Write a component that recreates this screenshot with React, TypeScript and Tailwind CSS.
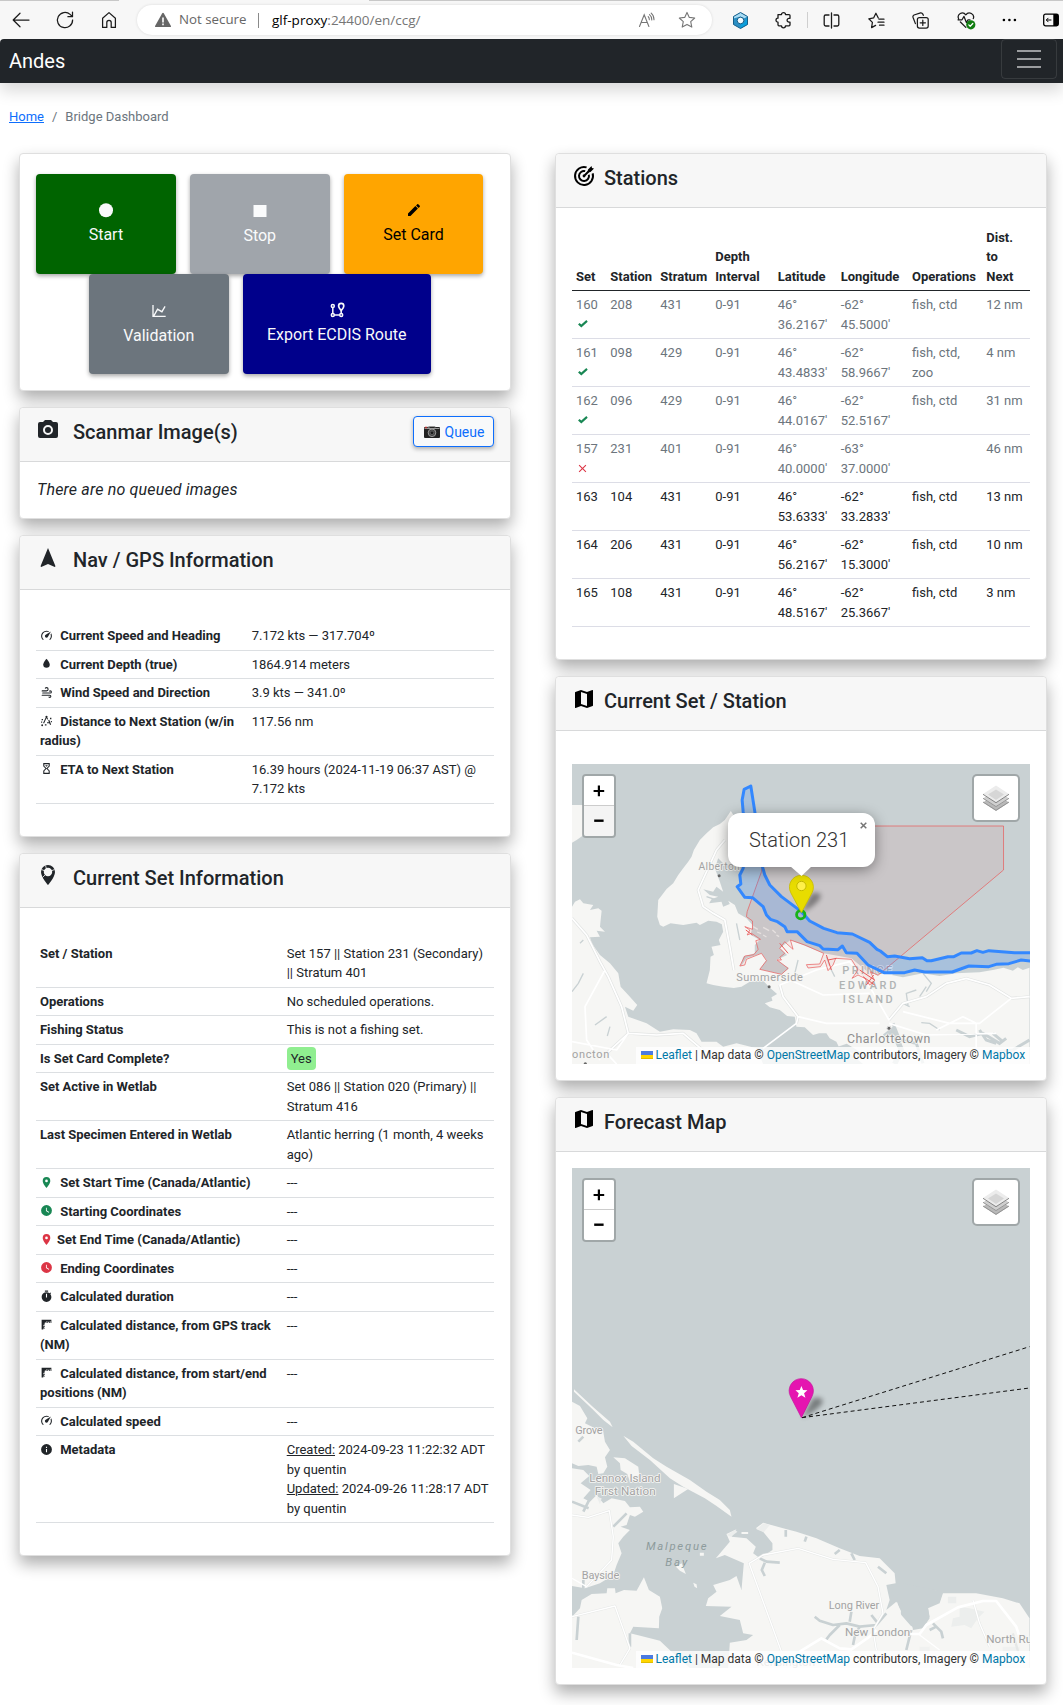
import React from "react";

const P = {
  camera:
    "M4,4H7L9,2H15L17,4H20A2,2 0 0,1 22,6V18A2,2 0 0,1 20,20H4A2,2 0 0,1 2,18V6A2,2 0 0,1 4,4M12,7A5,5 0 0,0 7,12A5,5 0 0,0 12,17A5,5 0 0,0 17,12A5,5 0 0,0 12,7M12,9A3,3 0 0,1 15,12A3,3 0 0,1 12,15A3,3 0 0,1 9,12A3,3 0 0,1 12,9Z",
  nav: "M12,2L4.5,20.29L5.21,21L12,18L18.79,21L19.5,20.29L12,2Z",
  water: "M12,20A6,6 0 0,1 6,14C6,10 12,3.25 12,3.25C12,3.25 18,10 18,14A6,6 0 0,1 12,20Z",
  speed:
    "M12,16A3,3 0 0,1 9,13C9,11.88 9.61,10.9 10.5,10.39L20.21,4.77L14.68,14.35C14.18,15.33 13.17,16 12,16M12,3C13.81,3 15.5,3.5 16.97,4.32L14.87,5.53C14,5.19 13,5 12,5A8,8 0 0,0 4,13C4,15.21 4.89,17.21 6.34,18.65H6.35C6.74,19.04 6.74,19.67 6.35,20.06C5.96,20.45 5.32,20.45 4.93,20.07V20.07C3.12,18.26 2,15.76 2,13A10,10 0 0,1 12,3M22,13C22,15.76 20.88,18.26 19.07,20.07V20.07C18.68,20.45 18.05,20.45 17.66,20.06C17.27,19.67 17.27,19.04 17.66,18.65V18.65C19.11,17.2 20,15.21 20,13C20,12 19.81,11 19.46,10.1L20.67,8C21.5,9.5 22,11.18 22,13Z",
  wind: "M4,10A1,1 0 0,1 3,9A1,1 0 0,1 4,8H12A2,2 0 0,0 14,6A2,2 0 0,0 12,4C11.45,4 10.95,4.22 10.59,4.59C10.2,5 9.56,5 9.17,4.59C8.78,4.2 8.78,3.56 9.17,3.17C9.9,2.45 10.9,2 12,2A4,4 0 0,1 16,6A4,4 0 0,1 12,10H4M19,12A1,1 0 0,0 20,11A1,1 0 0,0 19,10C18.72,10 18.47,10.11 18.29,10.29C17.9,10.68 17.27,10.68 16.88,10.29C16.5,9.9 16.5,9.27 16.88,8.88C17.42,8.34 18.17,8 19,8A3,3 0 0,1 22,11A3,3 0 0,1 19,14H5A1,1 0 0,1 4,13A1,1 0 0,1 5,12H19M18,18H4A1,1 0 0,1 3,17A1,1 0 0,1 4,16H18A3,3 0 0,1 21,19A3,3 0 0,1 18,22C17.17,22 16.42,21.66 15.88,21.12C15.5,20.73 15.5,20.1 15.88,19.71C16.27,19.32 16.9,19.32 17.29,19.71C17.47,19.89 17.72,20 18,20A1,1 0 0,0 19,19A1,1 0 0,0 18,18Z",
  distance:
    "M12,3A2,2 0 0,1 13.5,6.3L15,9.5L13.2,10.3L12,7.6L7.5,17.5L5.7,16.7L10.5,6.3A2,2 0 0,1 12,3M15.2,11.5L17,10.8L20.5,19.5L18.6,20.3L17.2,17H13V15H16.5L15.2,11.5M4,19A1.7,1.7 0 1,1 4,22.4A1.7,1.7 0 0,1 4,19M9,19H12V21H9V19M3,9H5.5V11.5H3V9M18.5,7H21V9.5H18.5V7M2,14H4V16H2V14M20,13H22V15H20V13Z",
  sand: "M6,2H18V8H18V8L14,12L18,16V16H18V22H6V16H6V16L10,12L6,8V8H6V2M16,16.5L12,12.5L8,16.5V20H16V16.5M12,11.5L16,7.5V4H8V7.5L12,11.5M10,6H14V6.75L12,8.75L10,6.75V6Z",
  marker:
    "M12,11.5A2.5,2.5 0 0,1 9.5,9A2.5,2.5 0 0,1 12,6.5A2.5,2.5 0 0,1 14.5,9A2.5,2.5 0 0,1 12,11.5M12,2A7,7 0 0,0 5,9C5,14.25 12,22 12,22C12,22 19,14.25 19,9A7,7 0 0,0 12,2Z",
  clock:
    "M12,2A10,10 0 0,0 2,12A10,10 0 0,0 12,22A10,10 0 0,0 22,12A10,10 0 0,0 12,2M16.2,16.2L11,13V7H12.5V12.2L17,14.9L16.2,16.2Z",
  timer:
    "M19.03,7.39L20.45,5.97C20,5.46 19.55,5 19.04,4.56L17.62,6C16.07,4.74 14.12,4 12,4A9,9 0 0,0 3,13A9,9 0 0,0 12,22C17,22 21,17.97 21,13C21,10.88 20.26,8.93 19.03,7.39M13,14H11V7H13V14M15,1H9V3H15V1Z",
  ruler:
    "M3,3H21V9H19.5V6H18V9H16.5V7H15V9H13.5V6H12V9H10.5V8H9V10.5H7V12H9V13.5H6V15H9V16.5H7V18H9V19.5H6V21H3V3Z",
  info: "M13,9H11V7H13M13,17H11V11H13M12,2A10,10 0 0,0 2,12A10,10 0 0,0 12,22A10,10 0 0,0 22,12A10,10 0 0,0 12,2Z",
  check: "M9,19.8L2.2,13.5L5.4,10.2L9,13.5L19.5,4.4L22.4,7.6L9,19.8Z",
  close:
    "M19,6.41L17.59,5L12,10.59L6.41,5L5,6.41L10.59,12L5,17.59L6.41,19L12,13.41L17.59,19L19,17.59L13.41,12L19,6.41Z",
  map: "M15,19L9,16.89V5L15,7.11M20.5,3C20.44,3 20.39,3 20.34,3L15,5.1L9,3L3.36,4.9C3.15,4.97 3,5.15 3,5.38V20.5A0.5,0.5 0 0,0 3.5,21C3.55,21 3.61,21 3.66,20.97L9,18.9L15,21L20.64,19.1C20.85,19 21,18.85 21,18.62V3.5A0.5,0.5 0 0,0 20.5,3Z",
  chart:
    "M16,11.78L20.24,4.45L21.97,5.45L16.74,14.5L10.23,10.75L5.46,19H22V21H2V3H4V17.54L9.5,8L16,11.78Z",
  pencil:
    "M20.71,7.04C21.1,6.65 21.1,6 20.71,5.63L18.37,3.29C18,2.9 17.35,2.9 16.96,3.29L15.12,5.12L18.87,8.87M3,17.25V21H6.75L17.81,9.93L14.06,6.18L3,17.25Z",
};

function Ico({ d, className = "" }: { d: string; className?: string }) {
  return (
    <svg viewBox="0 0 24 24" className={className} fill="currentColor" fillRule="evenodd">
      <path d={d} />
    </svg>
  );
}

function BrowserBar() {
  const s = { fill: "none", stroke: "#1b1b1b", strokeWidth: 1.25, strokeLinecap: "round", strokeLinejoin: "round" } as const;
  return (
    <div className="relative flex h-[39px] items-center bg-[#f7f7f7] pt-px">
      <div className="absolute left-0 top-0 h-px w-[119px] bg-[#c8c8c8]" />
      <div className="absolute right-0 top-0 h-px w-[694px] bg-[#c8c8c8]" />
      <svg className="ml-[11px] size-5 shrink-0" viewBox="0 0 20 20" {...s}>
        <path d="M18 10H2.5M9 3.2L2.2 10L9 16.8" />
      </svg>
      <svg className="ml-6 size-5 shrink-0" viewBox="0 0 20 20" {...s}>
        <path d="M17.6 10a7.6 7.6 0 1 1-2.5-5.6L17.4 6.6M17.5 2v4.7h-4.6" />
      </svg>
      <svg className="ml-6 size-5 shrink-0" viewBox="0 0 20 20" {...s}>
        <path d="M3.6 8.2L10 2.6l6.4 5.6v9.2h-4.2v-4.9a2.2 2.2 0 0 0-4.4 0v4.9H3.6z" />
      </svg>
      <div className="ml-[18px] flex h-[30px] w-[575px] shrink-0 items-center rounded-full bg-white shadow-[0_0_3px_rgba(0,0,0,0.12)]">
        <svg className="ml-[18px] size-4" viewBox="0 0 16 16">
          <path d="M7.2 1.2a1 1 0 0 1 1.6 0l7 12.6a.9.9 0 0 1-.8 1.3H1a.9.9 0 0 1-.8-1.3z" fill="#666" />
          <path d="M7.2 5.4h1.6v5H7.2zM7.2 11.6h1.6v1.6H7.2z" fill="#fff" />
        </svg>
        <span className="ml-2 w-[67px] whitespace-nowrap font-['Open_Sans',sans-serif] text-[13.3px] text-[#666]">Not secure</span>
        <span className="ml-3 h-[15px] w-px bg-[#8a8a8a]" />
        <span className="ml-[13px] whitespace-nowrap font-['Open_Sans',sans-serif] text-[13.5px] text-[#767676]">
          <span className="text-black">glf-proxy</span>:24400/en/ccg/
        </span>
        <svg className="ml-auto mr-[23px] size-[17px]" viewBox="0 0 17 17" fill="none" stroke="#767676" strokeWidth="1.1" strokeLinecap="round">
          <path d="M1.5 14.5L6.2 2.8L10.9 14.5M3.2 10.5H9.2M10.2 4.6q1.2 1.2 1.1 3M11.5 2.6q2.4 1.9 2.3 5.3M13.2 1.2q2.8 2.4 2.8 6.6" />
        </svg>
        <svg className="mr-4 size-[18px]" viewBox="0 0 18 18" fill="none" stroke="#767676" strokeWidth="1.1" strokeLinejoin="round">
          <path d="M9 1.4l2.3 5 5.4.6-4 3.7 1.1 5.4L9 13.4l-4.8 2.7 1.1-5.4-4-3.7 5.4-.6z" />
        </svg>
      </div>
      <svg className="ml-5 size-[17px] shrink-0" viewBox="0 0 17 17">
        <path d="M8.5.5l7 4v8l-7 4-7-4v-8z" fill="#2b8fc4" />
        <path d="M8.5.5l7 4-3 1.7-4-1.6-7 1.8V4.5z" fill="#a8dcf5" />
        <path d="M15.5 4.5v8l-7 4v-4l4-2z" fill="#0aa0dd" />
        <path d="M8.5.5l7 4v8l-7 4-7-4v-8z" fill="none" stroke="#155f8a" strokeWidth="1" />
        <circle cx="8.5" cy="8.5" r="3.3" fill="#f4fbff" stroke="#155f8a" strokeWidth="1" />
      </svg>
      <svg className="ml-[25px] size-[18px] shrink-0" viewBox="0 0 18 18" {...s} strokeWidth={1.3}>
        <path d="M4 3.600h3.500a2 2 0 1 1 4 0H15q1 0 1 1v2.700h-1a1.900 1.900 0 1 0 0 3.800h1v2.700q0 1-1 1h-3.500a2 2 0 1 1-4 0H5q-1 0-1-1v-2.600a2 2 0 1 1 0-4z" />
      </svg>
      <span className="ml-[15px] h-4 w-px shrink-0 bg-[#cfcfcf]" />
      <svg className="ml-[15px] size-[17px] shrink-0" viewBox="0 0 17 17" {...s} strokeWidth={1.3}>
        <path d="M6 3H2.6q-1.4 0-1.4 1.4v8.2q0 1.4 1.4 1.4H6M11 3h3.4q1.4 0 1.4 1.4v8.2q0 1.4-1.4 1.4H11M8.5 1v15" />
      </svg>
      <svg className="ml-7 size-[17px] shrink-0" viewBox="0 0 17 17" {...s}>
        <path d="M10.3 6L7.9 1.2 5.6 5.9.8 6.8l3.6 3.6-.8 5.2 4-2.2M11 7.2h5M10 10.2h6M11.5 13.2H16" />
      </svg>
      <svg className="ml-[27px] size-[17px] shrink-0" viewBox="0 0 17 17" {...s}>
        <rect x="5.4" y="5.6" width="10.8" height="10.4" rx="2" />
        <path d="M10.8 8.2v5.2M8.2 10.8h5.2M3.4 11.6L1 5.2Q.6 3.8 2 3L8.6.9q1.5-.2 2.2 1.2l.5 1.2" />
      </svg>
      <svg className="ml-7 size-[19px] shrink-0" viewBox="0 0 19 19" {...s}>
        <path d="M1.6 7.8C-.4 3.4 5.6-.4 8.8 3.8 12-.4 18 3.4 16.3 7.6M3.4 11l5.4 5.4M1 8.8h4l2-3.4 2.4 6.2L11 8.8h2" />
        <circle cx="13.8" cy="13.8" r="4.6" fill="#107c10" stroke="none" />
        <path d="M11.8 13.9l1.4 1.4 2.6-2.8" stroke="#fff" />
      </svg>
      <svg className="ml-[26px] h-4 w-[15px] shrink-0" viewBox="0 0 15 16">
        <circle cx="1.9" cy="8" r="1.3" />
        <circle cx="7.4" cy="8" r="1.3" />
        <circle cx="12.9" cy="8" r="1.3" />
      </svg>
      <svg className="ml-[26px] h-[14px] w-4 shrink-0" viewBox="0 0 16 14">
        <rect x=".7" y="1.2" width="14.6" height="11.6" rx="1.8" fill="none" stroke="#000" strokeWidth="1.3" />
        <path d="M10.3 1h3.5q1.5 0 1.5 1.5v9q0 1.5-1.5 1.5h-3.5z" />
        <path d="M8.4 7H3.4M5.4 4.9L3.3 7l2.1 2.1" fill="none" stroke="#000" />
      </svg>
    </div>
  );
}

function Card({ title, icon, right, wide, children }: { title?: string; icon?: React.ReactNode; right?: React.ReactNode; wide?: boolean; children: React.ReactNode }) {
  return (
    <section className="rounded border border-[#dfdfdf] bg-white shadow-[0_8px_16px_rgba(0,0,0,0.32)]">
      {title && (
        <header className="flex h-[54px] items-start rounded-t border-b border-[#d8d9da] bg-[#f7f7f7] px-4">
          <span className="mt-[9.500px] size-6 shrink-0">{icon}</span>
          <h5 className={(wide ? "ml-[13px]" : "ml-[8px]") + " mt-3 text-xl font-medium leading-6"}>{title}</h5>
          {right}
        </header>
      )}
      {children}
    </section>
  );
}

type Row = { icon?: string; tone?: string; tight?: boolean; label: string; value: React.ReactNode };

function InfoTable({ rows, nav }: { rows: Row[]; nav?: boolean }) {
  return (
    <div className="px-4 py-8">
      <table className="w-full table-fixed text-[13px] leading-[19.5px]">
        <colgroup>
          <col className={nav ? "w-[211.7px]" : "w-[246.7px]"} />
          <col />
        </colgroup>
        <tbody>
          {rows.map((r) => (
            <tr key={r.label} className="border-b border-[#dcdfe2] align-top">
              <th className="p-1 text-left font-bold tracking-[-0.01px]">
                {r.icon && (
                  <Ico d={r.icon} className={"inline-block size-[13px] align-[-1.5px] " + (r.tight ? "mr-[4px] " : "mr-[7.2px] ") + (r.tone ?? "")} />
                )}
                {r.label}
              </th>
              <td className="p-1">{r.value}</td>
            </tr>
          ))}
        </tbody>
      </table>
    </div>
  );
}

const navRows: Row[] = [
  { icon: P.speed, label: "Current Speed and Heading", value: "7.172 kts — 317.704º" },
  { icon: P.water, label: "Current Depth (true)", value: "1864.914 meters" },
  { icon: P.wind, label: "Wind Speed and Direction", value: "3.9 kts — 341.0º" },
  { icon: P.distance, label: "Distance to Next Station (w/in radius)", value: "117.56 nm" },
  { icon: P.sand, label: "ETA to Next Station", value: "16.39 hours (2024-11-19 06:37 AST) @ 7.172 kts" },
];

const setRows: Row[] = [
  { label: "Set / Station", value: "Set 157 || Station 231 (Secondary) || Stratum 401" },
  { label: "Operations", value: "No scheduled operations." },
  { label: "Fishing Status", value: "This is not a fishing set." },
  {
    label: "Is Set Card Complete?",
    value: <span className="-my-[2px] inline-block h-[23px] rounded bg-[#90ee90] px-1 leading-[23px]">Yes</span>,
  },
  { label: "Set Active in Wetlab", value: "Set 086 || Station 020 (Primary) || Stratum 416" },
  { label: "Last Specimen Entered in Wetlab", value: "Atlantic herring (1 month, 4 weeks ago)" },
  { icon: P.marker, tone: "text-[#198754]", label: "Set Start Time (Canada/Atlantic)", value: "---" },
  { icon: P.clock, tone: "text-[#198754]", label: "Starting Coordinates", value: "---" },
  { icon: P.marker, tone: "text-[#dc3545]", tight: true, label: "Set End Time (Canada/Atlantic)", value: "---" },
  { icon: P.clock, tone: "text-[#dc3545]", label: "Ending Coordinates", value: "---" },
  { icon: P.timer, label: "Calculated duration", value: "---" },
  { icon: P.ruler, label: "Calculated distance, from GPS track (NM)", value: "---" },
  { icon: P.ruler, label: "Calculated distance, from start/end positions (NM)", value: "---" },
  { icon: P.speed, label: "Calculated speed", value: "---" },
  {
    icon: P.info,
    label: "Metadata",
    value: (
      <>
        <span className="underline">Created:</span> 2024-09-23 11:22:32 ADT by quentin
        <br />
        <span className="underline">Updated:</span> 2024-09-26 11:28:17 ADT by quentin
      </>
    ),
  },
];

const stations = [
  ["160", "208", "431", "0-91", "46° 36.2167'", "-62° 45.5000'", "fish, ctd", "12 nm", "ok"],
  ["161", "098", "429", "0-91", "46° 43.4833'", "-62° 58.9667'", "fish, ctd, zoo", "4 nm", "ok"],
  ["162", "096", "429", "0-91", "46° 44.0167'", "-62° 52.5167'", "fish, ctd", "31 nm", "ok"],
  ["157", "231", "401", "0-91", "46° 40.0000'", "-63° 37.0000'", "", "46 nm", "no"],
  ["163", "104", "431", "0-91", "46° 53.6333'", "-62° 33.2833'", "fish, ctd", "13 nm", ""],
  ["164", "206", "431", "0-91", "46° 56.2167'", "-62° 15.3000'", "fish, ctd", "10 nm", ""],
  ["165", "108", "431", "0-91", "46° 48.5167'", "-62° 25.3667'", "fish, ctd", "3 nm", ""],
];

function StationsTable() {
  return (
    <div className="px-4 pb-8 pt-[15.500px]">
      <table className="w-full table-fixed text-[13px] leading-[19.5px]">
        <colgroup>
          <col className="w-[34.3px]" />
          <col className="w-[50px]" />
          <col className="w-[55px]" />
          <col className="w-[62.4px]" />
          <col className="w-[63px]" />
          <col className="w-[71.3px]" />
          <col className="w-[74.3px]" />
          <col />
        </colgroup>
        <thead>
          <tr className="border-b border-[#212529] text-left align-bottom">
            {["Set", "Station", "Stratum", "Depth Interval", "Latitude", "Longitude", "Operations", "Dist. to Next"].map((h, i) => (
              <th key={h} className={i === 7 ? "py-1 pl-1 pr-3 font-bold" : "py-1 pl-1 font-bold"}>
                {h}
              </th>
            ))}
          </tr>
        </thead>
        <tbody>
          {stations.map((r) => (
            <tr key={r[0]} className={"h-12 border-b border-[#dcdde6] align-top " + (r[8] ? "text-[#6c757d]" : "text-[#212529]")}>
              {r.slice(0, 8).map((c, i) => (
                <td key={i} className={i === 4 || i === 5 ? "py-1 pl-1 pr-3" : "py-1 pl-1"}>
                  {c}
                  {i === 0 && r[8] === "ok" && <Ico d={P.check} className="ml-px mt-[3px] size-[11.5px] text-[#198754]" />}
                  {i === 0 && r[8] === "no" && <Ico d={P.close} className="mt-[3px] size-[13px] text-[#dc3545]" />}
                </td>
              ))}
            </tr>
          ))}
        </tbody>
      </table>
    </div>
  );
}

function MapControls({ dim }: { dim?: boolean }) {
  return (
    <>
      <div className="absolute left-[10px] top-[10px] w-[34px] rounded-[4px] border-2 border-black/20 bg-clip-padding text-center text-black">
        <div className="flex h-[30px] items-center justify-center rounded-t-[2px] border-b border-[#ccc] bg-white">
          <svg className="mt-px size-3" viewBox="0 0 12 12"><path d="M4.8.6h2.2v4.3h4.2V7H7v4.3H4.8V7H.6V4.9h4.2z" /></svg>
        </div>
        <div className={"flex h-[30px] items-center justify-center rounded-b-[2px] " + (dim ? "bg-[#f4f4f4]" : "bg-white")}>
          <svg className="size-3" viewBox="0 0 12 12"><path d="M1.2 4.5h9.4v2.4H1.2z" /></svg>
        </div>
      </div>
      <div className="absolute right-[10px] top-[10px] flex size-12 items-center justify-center rounded-[5px] border-2 border-black/20 bg-white bg-clip-padding">
        <svg className="size-[26px]" viewBox="0 0 26 26">
          <path d="M0 17.5L13 26l13-8.500-3-2-10 6-10-6z" fill="#b9b9b9" />
          <path d="M0 17l13 8.300L26 17" fill="none" stroke="#8d8d8d" strokeWidth=".9" />
          <path d="M0 13.500L13 22l13-8.500-3-2-10 6-10-6z" fill="#cfcfcf" />
          <path d="M0 13.300L13 21.600l13-8.300" fill="none" stroke="#8d8d8d" strokeWidth=".9" />
          <path d="M13 .6L26 9 13 17.600 0 9z" fill="#ececec" />
          <path d="M13 4.500l8 5-8 5.500-8-5.500z" fill="#d6d6d6" />
          <path d="M0 9.300L13 17.700 26 9.300" fill="none" stroke="#777" strokeWidth=".9" />
        </svg>
      </div>
    </>
  );
}

function Attribution() {
  return (
    <div className="absolute bottom-0 right-0 flex h-[17px] w-[394px] items-center whitespace-nowrap bg-white/80 pl-[5px] text-[12px] leading-[17px] text-[#333]">
      <svg className="mr-[3px] h-2 w-3 shrink-0" viewBox="0 0 12 8">
        <path d="M0 0h12v4H0z" fill="#4c7be1" />
        <path d="M0 4h12v3H0z" fill="#ffd500" />
        <path d="M0 7h12v1H0z" fill="#e0bc00" />
      </svg>
      <span className="whitespace-pre">
        <span className="text-[#0078a8]">Leaflet</span> | Map data © <span className="text-[#0078a8]">OpenStreetMap</span> contributors, Imagery ©{" "}
        <span className="text-[#0078a8]">Mapbox</span>
      </span>
    </div>
  );
}

const label = {
  fontFamily: "Roboto, sans-serif",
  fill: "#a3a3a3",
  stroke: "#f6f6f4",
  strokeWidth: 5,
  paintOrder: "stroke",
  strokeLinejoin: "round",
} as const;

function StationMap() {
  return (
    <div className="relative h-[300px] overflow-hidden bg-[#c9d1d3]">
      <svg className="block h-[300px] w-full" viewBox="66 72 1374 900" preserveAspectRatio="none">
        <defs>
          <filter id="soft" x="-50%" y="-50%" width="200%" height="200%">
            <feGaussianBlur stdDeviation="8" />
          </filter>
        </defs>
        <g fill="#f6f6f4">
          <path d="M66 195H97V288L80 300 66 308z" />
          <path d="M543 213L525 240 510 252 490 262 470 280 450 300 432 330 425 350 415 365 400 385 385 405 370 430 350 447 325 480 322 530 330 555 340 560 362 550 400 555 440 548 450 555 475 542 500 545 516 553 520 575 507 600 512 615 485 620 492 645 482 650 480 690 470 730 490 735 520 740 552 744 575 740 600 725 640 722 662 745 682 762 665 772 668 782 645 790 660 802 690 810 712 828 735 830 740 860 765 862 790 885 808 880 830 880 840 895 860 905 872 930 900 940 940 972H1440V683L1420 690 1405 682 1390 692 1362 683 1330 690 1290 697 1220 700 1170 708 1120 700 1060 712 1000 700 985 706 950 692 905 655 822 640 722 600 690 625 712 645 680 660 718 685 695 703 630 688 650 660 635 640 590 655 572 680 580 650 615 640 615 615 630 600 603 585 608 555 590 535 565 520 555 495 535 482 540 492 520 500 515 485 478 490 485 478 505 470 480 465 460 448 490 455 500 440 520 455 510 425 495 385 505 355 525 375 560 375 585 300 560 240z" />
          <path d="M66 500L75 485 90 478 100 490 130 495 120 510 145 505 155 512 150 560 165 575 140 572 150 590 120 592 125 610 150 645 180 670 205 700 212 740 235 765 262 795 250 812 225 800 235 830 290 850 330 875 370 868 420 870 440 880 455 905 500 905 520 920 560 910 620 925 640 972H66z" />
        </g>
        <g fill="none" stroke="#c9d1d3" strokeWidth="4">
          <path d="M100 700L85 730 66 755M170 830l-35 25M180 860l-8 28M1120 700l25 30-15 25M1100 750l-30 10 5 35M1060 790l20 10M1130 740l-20 30M1170 870l-30-20-25-2M830 650l15 40 10 20M745 660l-10 40 15 10M100 600l-10 10M560 550l10 50M470 470l30 10" />
          <path d="M1030 850l20 50 50 10 20 60M1220 870l40 20 40-10 50 30 20-15M1290 870l20 30 30 10M1330 880l30 25M1310 940l80-10 50-30" strokeWidth="9" />
          <path d="M1005 890l25-20 25 60-20 42M860 930l30-10 50 30" strokeWidth="16" />
        </g>
        <g fill="none" stroke="#e2e4e3" strokeWidth="9" strokeLinejoin="round">
          <path d="M66 535L110 585 150 665 175 710 215 800 235 880 320 885 400 880 470 940M235 880L170 940M525 300L500 330 445 450 460 500 490 520 525 540 540 620 552 690M690 735L700 770 745 830 740 850M1018 840L1060 790 1130 770 1190 730 1250 715 1320 735 1385 775 1440 770" />
        </g>
        <g fill="none" stroke="#fff" strokeWidth="5" strokeLinejoin="round">
          <path d="M66 535L110 585 150 665 175 710 215 800 235 880 320 885 400 880 470 940M235 880L170 940 200 972M235 880L200 930 66 905M165 690L105 800 110 900 150 960M525 300L500 330 445 450 460 500 490 520 525 540 540 620 552 690M690 735L700 770 745 830 740 850L640 925M690 735L800 690 900 665 960 740 1018 840M745 830L830 850 990 850M700 710L820 765 960 760M1018 840L1060 790 1130 770 1190 730 1250 715 1320 735 1385 775 1440 770M1060 815L1200 850 1290 850 1385 775M1018 850L1130 885 1340 880M1160 870L1240 830 1280 850V940" />
        </g>
        <g fontSize="31" {...label}>
          <text x="446" y="391" textLength="124">Alberton</text>
          <text x="559" y="723" fontSize="33" textLength="200">Summerside</text>
          <text x="892" y="910" fontSize="37" fill="#8f8f8f" textLength="250">Charlottetown</text>
          <text x="66" y="954" fontSize="33" textLength="112">oncton</text>
          <g fontSize="33" fontWeight="500" fill="#b0b3b3">
            <text x="878" y="701" textLength="150">PRINCE</text>
            <text x="868" y="746" textLength="172">EDWARD</text>
            <text x="879" y="789" textLength="150">ISLAND</text>
          </g>
        </g>
        <g fill="#666">
          <circle cx="508" cy="407" r="4.500" />
          <circle cx="658" cy="740" r="4.500" />
          <circle cx="1018" cy="865" r="6" stroke="#ddd" strokeWidth="3" />
          <circle cx="106" cy="972" r="5" />
        </g>
        <path
          d="M650 258H1362V390L985 706 962 695 975 722 960 735 945 715 925 705 907 715 925 690 905 658 858 655 850 675 835 692 825 660 812 680 775 684 770 674 810 672 822 640 765 615 722 600 730 628 715 615 705 605 690 625 705 640 690 652 695 660 682 660 715 685 695 703 630 688 650 662 635 640 590 658 585 675 570 678 585 648 612 644 625 628 618 602 632 598 605 580 592 585 600 570 585 560 608 568 608 543 590 530 592 515 635 395z"
          fill="rgba(225,60,60,0.07)"
          stroke="#e85a5a"
          strokeOpacity=".7"
          strokeWidth="3"
        />
        <path d="M930 690l45 30M940 710l35 25M950 735l22-30M830 645l15 45M835 660l25-5M588 570l20 15M690 610l25 30" stroke="#e85a5a" strokeWidth="3" fill="none" />
        <path d="M610 560l14 8M622 576l12 5M640 562l18 10M668 570l10 9M640 585l10 6M680 585l8 5" stroke="#e6e0df" strokeWidth="4" />
        <path
          d="M603 138L583 148 577 180 580 215 590 300 580 385 570 405 573 432 562 440 585 472 608 473 640 500 650 525 662 538 683 545 705 560 712 575 742 575 772 605 810 617 820 627 865 629 878 618 890 638 922 640 955 675 1003 698H1065L1095 690 1125 696H1208L1258 678 1318 680 1340 673 1378 671 1415 660 1460 665V638H1395L1318 632 1300 637 1282 632 1265 639H1235L1213 650H1195L1145 662H1132L1118 653 1080 656 1035 648 1013 650 992 633 982 628 960 607 908 582 862 578 822 565 780 543 755 515 695 470 660 435 645 405 638 380 615 215z"
          fill="#3388ff"
          fillOpacity=".22"
          stroke="#3388ff"
          strokeWidth="9"
          strokeLinejoin="round"
        />
        <path d="M754 518L785 460Q825 452 808 480Q786 505 754 518z" fill="#000" opacity=".38" filter="url(#soft)" />
        <circle cx="753" cy="524" r="12.500" fill="none" stroke="#17b317" strokeWidth="8.500" />
        <path d="M755 518L723 458A36 36 0 1 1 787 458z" fill="#e8dc00" stroke="#c9bd00" strokeWidth="2.500" />
        <circle cx="755" cy="438" r="14" fill="#fff04a" stroke="#c3b800" strokeWidth="3" />
      </svg>
      <MapControls dim />
      <div className="absolute left-[156px] top-[49px] h-[54px] w-[147px] rounded-[12px] bg-white shadow-[0_3px_14px_rgba(0,0,0,0.4)]">
        <span className="absolute left-[21px] top-[14px] whitespace-nowrap text-[20px] font-light leading-[26px] text-[#333]">Station 231</span>
        <svg className="absolute right-[8px] top-[9px] size-[7px]" viewBox="0 0 8 8" stroke="#757575" strokeWidth="1.700">
          <path d="M.8.8l6.400 6.400M7.200.8L.8 7.200" />
        </svg>
        <svg className="absolute left-[62px] top-[53px] h-[10px] w-[22px]" viewBox="0 0 22 10">
          <path d="M0 0h22L11.500 10z" fill="#fff" />
        </svg>
      </div>
      <Attribution />
    </div>
  );
}

function ForecastMap() {
  return (
    <div className="relative h-[500px] overflow-hidden bg-[#c9d1d3]">
      <svg className="block h-[500px] w-full" viewBox="66 -606 1374 1500" preserveAspectRatio="none">
        <g fill="#f6f6f4">
          <path d="M66 95L90 108 112 145 105 160 135 175 158 175 165 215 180 240 165 262 172 290 160 310 145 312 140 290 115 285 85 288 66 280zM66 295L100 300 118 318 92 340 122 360 100 385 120 395 140 375 160 400 185 385 225 393 240 412 270 410 280 425 255 440 240 435 230 465 212 470 240 480 220 500 205 520 215 550 200 585 190 615 150 640 105 655 66 648z" />
          <path d="M72 58L130 112 180 155 188 172 160 150 130 120 72 65zM220 197L250 215 310 265 350 290 420 330 470 365 510 390 540 420 545 440 500 408 465 385 400 350 360 325 300 270 245 228z" />
          <path d="M190 262L225 265 265 290 268 315 240 335 232 312 212 300 210 280zM372 342L415 357 395 370 372 385z" />
          <path d="M66 740L90 715 95 690 125 672 170 670 172 655 195 655 197 670 222 660 260 662 282 622 297 660 330 680 337 715 328 740 327 775 250 770 240 790 262 795 330 812 365 845 420 894H66z" />
          <path d="M525 555L498 565 540 515 530 492 560 478 545 500 590 505 618 530 610 550 630 565 668 540 668 520 640 485 618 475 640 458 700 475 740 485 800 505 870 535 930 558 990 565 1035 610 1038 640 1010 645 1020 690 1010 720 1040 695 1060 735 1085 760 1090 780 1120 775 1140 745 1135 715 1170 700 1180 670 1280 670 1360 685 1410 700 1440 745V894H535L540 818 590 810 610 795 580 790 570 750 510 738 545 710 468 708 475 685 500 665 490 645 540 630 560 618 575 660 582 580z" />
          <path d="M1068 645L1120 655 1172 665 1120 660 1068 650zM378 590L395 580 408 612 390 602zM450 548h12v9h-12zM430 638l10 5 2 12-8-5zM575 486h20v6h-20z" />
        </g>
        <g fill="none" stroke="#c9d1d3" strokeWidth="8" strokeLinejoin="round">
          <path d="M630 565L650 575 690 578M645 578L636 600 645 618M795 740L810 752 850 765 890 760 930 770 980 765 1010 730M900 755L905 725M870 765L840 795 830 808M930 770L915 800 910 825M965 735L985 760M1010 610L985 590M1085 780l-15 60M1150 760l25 25 5 20M1160 770l-20 10M770 500l-5 15M708 480v20M870 540l-15 12M905 550l10 20M85 740l-5 70M66 670h50M240 790v40M100 630v25M100 200l-15 15M66 395l50 20M120 385l-20 40M230 430l-40 40" />
        </g>
        <path d="M1060 700L1050 740 1080 770 1100 765 1140 740 1135 712 1170 695 1180 665 1060 640 1020 670z" fill="#c9d1d3" />
        <path d="M1042 695L1028 730 1010 745 1005 775 1060 790 1090 775 1055 735z" fill="#f6f6f4" />
        <g fill="#eceeed">
          <path d="M620 478l22-18 18 5-18 22zM1195 680h25v20h-25zM1230 710l30 5 45 10-20 20-20 30-20-10-40 5 5-25 20-5zM140 380l15 5-5 18zM530 495l25-15 8 5-20 15z" />
          <path d="M1360 830h50v30h-50zM1110 830h30v20h-30z" opacity=".6" />
        </g>
        <g fill="none" stroke="#e6e8e7" strokeWidth="7" strokeLinejoin="round">
          <path d="M66 435L115 442 178 422 190 500 185 570 110 650M66 740L195 708 240 835 210 885M695 845L598 580 640 555 745 535 850 568 948 578 985 650 1000 730 970 780 980 840M1270 690L1290 760 1320 830M1390 790L1410 860" />
        </g>
        <g fill="none" stroke="#fff" strokeWidth="4" strokeLinejoin="round">
          <path d="M66 435L115 442 178 422 190 500 185 570 110 650 66 625M66 740L195 708 240 835 210 885M695 845L598 580 640 555 745 535 850 568 948 578 985 650 1000 730 970 780 980 840M1270 690L1290 760 1320 830M1110 795L1170 840" />
          <path d="M66 848L200 885 250 894M750 845L815 805 870 835 905 838 960 800 980 780M1080 792H1110L1130 765 1225 712 1300 693H1340L1400 770 1410 800" strokeWidth="8" />
        </g>
        <g fontSize="33" {...label}>
          <text x="76" y="192" textLength="82">Grove</text>
          <text x="118" y="336" fontSize="35" textLength="214">Lennox Island</text>
          <text x="134" y="376" fontSize="35" textLength="183">First Nation</text>
          <text x="95" y="626" textLength="113">Bayside</text>
          <text x="837" y="716" textLength="152">Long River</text>
          <text x="886" y="798" fontSize="35" textLength="196">New London</text>
          <text x="1310" y="818" fontSize="35">North Rustico</text>
          <text x="620" y="888" fontSize="35" textLength="176">Kensington</text>
        </g>
        <g fontSize="34" fontStyle="italic" fontFamily="Roboto, sans-serif" fill="#8d9b9c">
          <text x="288" y="540" textLength="182">Malpeque</text>
          <text x="346" y="587" textLength="66">Bay</text>
        </g>
        <path d="M757 143L790 84Q830 78 814 105Q792 128 757 143z" fill="#000" opacity=".4" filter="url(#soft)" />
        <path d="M757 143L1440 -70M757 143L1440 54" stroke="#111" strokeWidth="3" strokeDasharray="12 9" fill="none" />
        <path d="M755 143L722 79A36.500 36.500 0 1 1 787 79z" fill="#e515b0" stroke="#c4109a" strokeWidth="2" />
        <path d="M755 48l5 12 13 1-10 9 4 13-12-7-12 7 4-13-10-9 13-1z" fill="#fff" />
      </svg>
      <MapControls />
      <Attribution />
    </div>
  );
}

const tile = "flex h-[100px] flex-col items-center rounded pt-[27px] text-base leading-6 shadow-[0_2px_4px_rgba(0,0,0,0.35)]";

function Actions() {
  return (
    <div className="flex flex-col px-4 pb-4 pt-5">
      <div className="flex justify-center gap-[14px] pr-[10px]">
        <button className={tile + " w-[140px] bg-[#006400] text-[#f8f9fa]"}>
          <svg className="mb-1 size-[18px]" viewBox="0 0 18 18" fill="currentColor"><circle cx="9" cy="9.200" r="7" /></svg>
          Start
        </button>
        <button className={tile + " w-[140px] bg-[#a0a5ab] text-[#fafbfc]"}>
          <svg className="mb-[5px] size-[18px]" viewBox="0 0 18 18" fill="currentColor"><path d="M2.500 4h13v12h-13z" /></svg>
          Stop
        </button>
        <button className={tile + " w-[140px] bg-[#ffa500] text-black"}>
          <Ico d={P.pencil} className="mb-[5px] mt-px size-4" />
          Set Card
        </button>
      </div>
      <div className="flex justify-center gap-[14px] pr-[10px]">
        <button className={tile + " w-[140px] bg-[#6c757d] text-[#f8f9fa]"}>
          <Ico d={P.chart} className="mb-[5px] mt-[2px] size-4" />
          Validation
        </button>
        <button className={tile + " w-[188px] bg-[#00008b] text-[#f8f9fa]"}>
          <svg className="mb-[5px] mt-[1px] size-4" viewBox="0 0 16 16" fill="none" stroke="currentColor" strokeWidth="1.500">
            <circle cx="3.800" cy="4" r="1.500" />
            <circle cx="3.800" cy="13" r="1.500" />
            <circle cx="12.200" cy="13" r="1.500" />
            <path d="M3.800 5.500v6M5.300 13h5.400M12.200 9v2.500" />
            <path d="M12.200 8.700Q9.600 6 9.600 4a2.600 2.600 0 0 1 5.200 0Q14.800 6 12.200 8.700z" strokeWidth="1.700" />
          </svg>
          Export ECDIS Route
        </button>
      </div>
    </div>
  );
}

export default function App() {
  return (
    <div className="h-[1705px] w-[1063px] overflow-hidden bg-white font-[Roboto,sans-serif] text-[#212529]">
      <BrowserBar />
      <nav className="flex h-11 items-start justify-between rounded-tl bg-[#212529] pl-[9px] pr-[6.500px] shadow-[0_8px_16px_rgba(0,0,0,0.15)]">
        <span className="mt-2 text-xl leading-7 text-white">Andes</span>
        <button className="flex h-10 w-[56px] flex-col items-center justify-center gap-[6px] rounded border border-white/10">
          <span className="h-0.5 w-6 bg-[#9b9d9f]" />
          <span className="h-0.5 w-6 bg-[#9b9d9f]" />
          <span className="h-0.5 w-6 bg-[#9b9d9f]" />
        </button>
      </nav>
      <div className="flex h-[70px] items-start pl-[9px] pt-[23.500px] text-[13px] leading-5 text-[#6c757d]">
        <span className="text-[#0d6efd] underline">Home</span>
        <span className="px-2">/</span>
        <span>Bridge Dashboard</span>
      </div>
      <main className="grid grid-cols-[491.5px_491.5px] items-start gap-[44.500px] pl-[19px]">
        <div className="flex flex-col gap-4">
          <Card>
            <Actions />
          </Card>
          <Card
            wide
            title="Scanmar Image(s)"
            icon={<Ico d={P.camera} className="size-6" />}
            right={
              <button className="ml-auto mt-2 flex h-[31px] w-[81px] items-center rounded border border-[#0d6efd] bg-[#f8f9fa] pl-[10px] text-sm text-[#0d6efd] shadow-[0_2px_4px_rgba(0,0,0,0.3)]">
                <svg className="mr-[5px] h-3 w-4" viewBox="0 0 16 12">
                  <rect y="1" width="16" height="11" rx="1" fill="#222" />
                  <path d="M.5 2.500h15M3.500 1h2M5 1.500V.5h6v1" stroke="#999" strokeWidth="1" fill="none" />
                  <circle cx="2" cy="1.500" r=".9" fill="#c33" />
                  <circle cx="8" cy="6.800" r="3.800" fill="#444" stroke="#999" />
                  <circle cx="8" cy="6.800" r="1.800" fill="#1a1a1a" stroke="#777" strokeWidth=".6" />
                </svg>
                Queue
              </button>
            }
          >
            <p className="ml-px p-4 text-base italic leading-6 tracking-[0.17px]">There are no queued images</p>
          </Card>
          <Card wide title="Nav / GPS Information" icon={<Ico d={P.nav} className="size-6" />}>
            <InfoTable nav rows={navRows} />
          </Card>
          <Card
            wide
            title="Current Set Information"
            icon={
              <svg viewBox="0 0 24 24" className="size-6" fill="currentColor" fillRule="evenodd">
                <path d="M12 2A7 7 0 0 0 5 9C5 14.250 12 22 12 22S19 14.250 19 9A7 7 0 0 0 12 2M12 4.800A4.200 4.200 0 1 1 12 13.200A4.200 4.200 0 0 1 12 4.800z" />
                <path d="M5.500 6.500L9 8M9.500 2.500l1 3.500M18.500 6.500L15 8M9 12l-2.500 2.500" stroke="#f7f7f7" strokeWidth=".8" />
              </svg>
            }
          >
            <InfoTable rows={setRows} />
          </Card>
        </div>
        <div className="flex flex-col gap-4">
          <Card
            title="Stations"
            icon={
              <svg viewBox="0 0 24 24" className="size-6" fill="none" stroke="#000" strokeWidth="2">
                <path d="M14.600 3.350A9 9 0 1 0 20.650 9.400" />
                <path d="M13.200 7.150A5 5 0 1 0 16.850 10.800" />
                <path d="M12 12L17 7" />
                <circle cx="12" cy="12" r="1.400" fill="#000" stroke="none" />
                <path d="M15.500 8.500L16 5.500 19.500 2 20 4 22 4.500 18.500 8z" fill="#000" stroke="none" />
              </svg>
            }
          >
            <StationsTable />
          </Card>
          <Card title="Current Set / Station" icon={<Ico d={P.map} className="size-6 text-black" />}>
            <div className="px-4 pb-4 pt-[32.500px]">
              <StationMap />
            </div>
          </Card>
          <Card title="Forecast Map" icon={<Ico d={P.map} className="size-6 text-black" />}>
            <div className="p-4">
              <ForecastMap />
            </div>
          </Card>
        </div>
      </main>
    </div>
  );
}
